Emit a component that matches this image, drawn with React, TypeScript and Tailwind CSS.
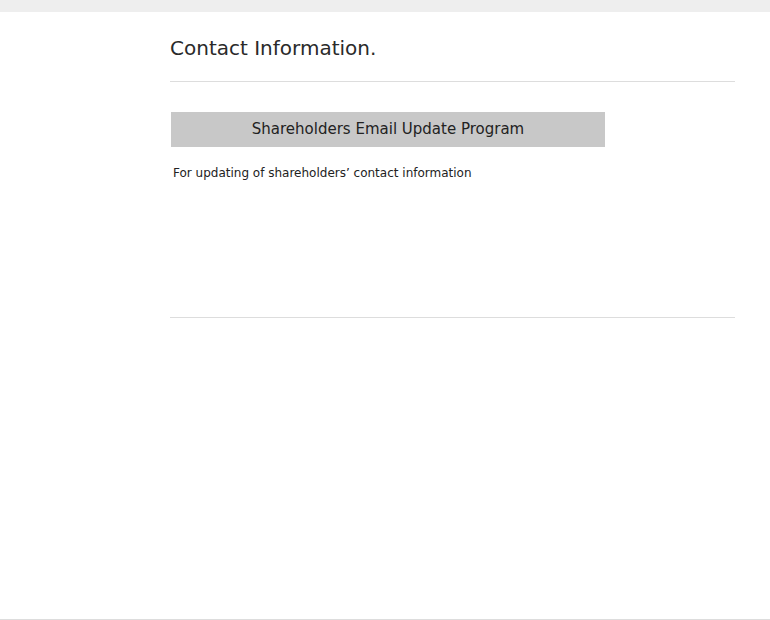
export default function App() {
  return (
    <div className="min-h-[620px] bg-white flex flex-col font-['DejaVu_Sans',Verdana,sans-serif] text-[#222]">
      {/* Top bar */}
      <div className="h-3 bg-[#eeeeee]" />

      <div className="flex-1 pl-[170px] pr-[35px]">
        <h1 className="pt-[23px] text-[20px] leading-[26px] text-[#2a2a2a]">Contact Information.</h1>
        <div className="mt-[20px] h-px bg-[#dddddd]" />

        <div className="mt-[30px] ml-px w-[434px] h-[35px] bg-[#c8c8c8] flex items-center justify-center">
          <span className="text-[15px] text-[#222]">Shareholders Email Update Program</span>
        </div>

        <p className="mt-[18px] ml-[3px] text-[12px] leading-[16px] text-[#222]">
          For updating of shareholders’ contact information
        </p>

        <div className="mt-[136px] h-px bg-[#dddddd]" />
      </div>

      {/* Footer line */}
      <div className="h-px bg-[#dddddd]" />
    </div>
  )
}
